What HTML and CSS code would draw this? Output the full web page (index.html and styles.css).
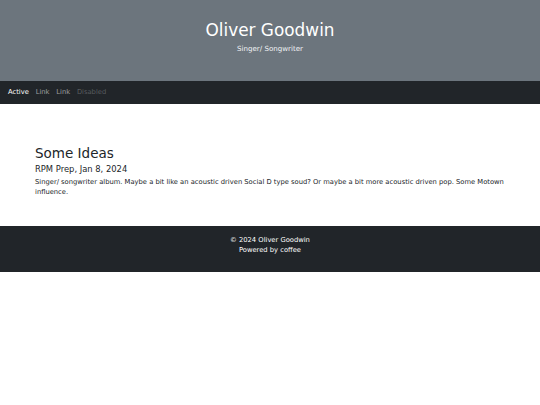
FILE: index.html
```html
<!DOCTYPE html>
<html lang="en">
<head>
    <meta charset="UTF-8" />
    <meta name="viewport" content="width=device-width, initial-scale=1.0" />
    <title>Oliver Goodwin</title>
    <link rel="stylesheet" href="styles.css">
</head>
<body>
    <header class="hero">
        <h1>Oliver Goodwin</h1>
        <p>Singer/ Songwriter</p>
    </header>

    <nav class="topnav">
        <a href="#" class="active">Active</a>
        <a href="#">Link</a>
        <a href="#">Link</a>
        <a class="disabled">Disabled</a>
    </nav>

    <main class="content">
        <h2>Some Ideas</h2>
        <h3>RPM Prep, Jan 8, 2024</h3>
        <p>Singer/ songwriter album. Maybe a bit like an acoustic driven Social D type soud? Or maybe a bit more acoustic driven pop. Some Motown influence.</p>
    </main>

    <footer class="footer">
        <p>&copy; 2024 Oliver Goodwin</p>
        <p>Powered by coffee</p>
    </footer>
</body>
</html>
```

FILE: styles.css
```css
/* Main Styles */
body {
    margin: 0;
    padding: 0;
    background-color: #fff;
    color: #212529;
    font-family: 'DejaVu Sans', sans-serif;
    font-size: 6.75px;
    line-height: 1.5;
}

/* Header */
.hero {
    background-color: #6c757d;
    color: #fff;
    text-align: center;
    height: 81px;
    box-sizing: border-box;
    padding-top: 20px;
}

.hero h1 {
    margin: 0;
    font-size: 16.9px;
    font-weight: normal;
    line-height: 1.2;
}

.hero p {
    margin: 3.4px 0 0;
    font-size: 7.1px;
    color: #f1f3f5;
}

/* Nav */
.topnav {
    background-color: #212529;
    height: 23px;
    display: flex;
    align-items: center;
    padding: 0 4.6px;
}

.topnav a {
    text-decoration: none;
    color: rgba(255, 255, 255, 0.55);
    padding: 0 3.4px;
}

.topnav a.active {
    color: #fff;
}

.topnav a.disabled {
    color: rgba(255, 255, 255, 0.25);
}

/* Content */
.content {
    padding: 41px 35px 28.6px;
}

.content h2 {
    margin: 0 0 2.4px;
    font-size: 13.5px;
    font-weight: normal;
    line-height: 1.2;
}

.content h3 {
    margin: 0 0 3.4px;
    font-size: 8.4px;
    font-weight: normal;
    line-height: 1.2;
}

.content p {
    margin: 0;
}

/* Footer */
.footer {
    background-color: #212529;
    color: #fff;
    text-align: center;
    height: 46px;
    box-sizing: border-box;
    padding-top: 9px;
}

.footer p {
    margin: 0;
}
```
